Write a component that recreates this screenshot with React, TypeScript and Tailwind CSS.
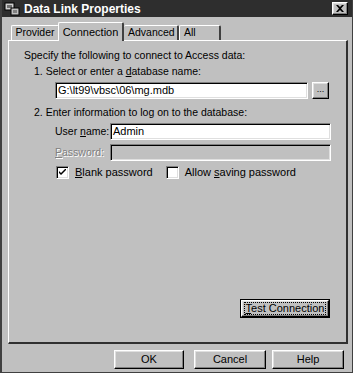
import React from "react";

const raised =
  "border border-t-white border-l-white border-r-black border-b-black shadow-[inset_-1px_-1px_0_#808080,inset_1px_1px_0_#dfdfdf]";
const sunken =
  "border border-t-[#808080] border-l-[#808080] border-r-white border-b-white shadow-[inset_1px_1px_0_#000,inset_-1px_-1px_0_#dfdfdf]";

function Check({ checked }: { checked?: boolean }) {
  return (
    <span className={`w-[13px] h-[13px] bg-white ${sunken} flex items-center justify-center shrink-0`}>
      {checked && (
        <svg width="7" height="7" viewBox="0 0 7 7">
          <path d="M0 2 L0 4 L2 6 L7 1 L7 -1 L2 4 Z" fill="#000" />
        </svg>
      )}
    </span>
  );
}

export default function App() {
  return (
    <div
      className="w-[353px] h-[373px] bg-[#c0c0c0] flex flex-col border-l-2 border-l-[#404040] border-r border-r-[#404040] border-b border-b-[#404040] text-[10.5px] text-black overflow-hidden whitespace-nowrap"
      style={{ fontFamily: '"Liberation Sans", Arial, sans-serif' }}
    >
      {/* title bar */}
      <div className="h-[17px] bg-[#2e2e2e] flex items-center pl-[2px] pr-[4px] shrink-0">
        <svg width="16" height="14" viewBox="0 0 16 14" className="shrink-0">
          <rect x="1" y="1" width="9" height="7" fill="#d0d0d0" stroke="#000" />
          <rect x="3" y="3" width="5" height="3" fill="#707070" />
          <rect x="7" y="6" width="8" height="7" fill="#c0c0c0" stroke="#000" />
          <rect x="9" y="8" width="4" height="3" fill="#808080" />
        </svg>
        <span className="ml-[4px] text-white font-bold text-[12px]">Data Link Properties</span>
        <div className={`ml-auto w-[16px] h-[13px] bg-[#c0c0c0] ${raised} flex items-center justify-center`}>
          <svg width="8" height="7" viewBox="0 0 8 7">
            <path d="M0 0 L2 0 L4 2 L6 0 L8 0 L5 3.5 L8 7 L6 7 L4 5 L2 7 L0 7 L3 3.5 Z" fill="#000" />
          </svg>
        </div>
      </div>

      <div className="flex-1 flex flex-col pl-[6px] pr-[4px] pt-[5px]">
        {/* tabs */}
        <div className="flex items-end h-[18px] pl-[3px] relative z-10">
          <div className="w-[48px] h-[15px] justify-center border-t border-l border-t-white border-l-white border-r border-r-[#404040] rounded-t-[2px] flex items-center">
            Provider
          </div>
          <div className="w-[66px] h-[19px] -mb-[1px] -ml-[1px] justify-center bg-[#c0c0c0] border-t border-l border-t-white border-l-white border-r-2 border-r-[#404040] rounded-t-[2px] flex items-start pt-[1px] text-[11px]">
            Connection
          </div>
          <div className="w-[55px] h-[15px] px-[4px] border-t border-t-white border-r-2 border-r-[#404040] rounded-t-[2px] flex items-center">
            Advanced
          </div>
          <div className="h-[15px] w-[42px] px-[4px] border-t border-l border-t-white border-l-white border-r-2 border-r-[#404040] rounded-t-[2px] flex items-center">
            All
          </div>
        </div>
        {/* panel */}
        <div className="h-[304px] border-t border-l border-t-white border-l-white border-r-2 border-b-2 border-r-[#303030] border-b-[#303030] flex flex-col pl-[15px] pr-[14px] pt-[8px]">
          <div className="leading-[13px]">Specify the following to connect to Access data:</div>
          <div className="leading-[13px] mt-[3px] pl-[10px]">
            1. Select or enter a <span className="underline">d</span>atabase name:
          </div>
          <div className="flex items-center mt-[4px] pl-[31px] gap-[4px]">
            <div className={`w-[253px] h-[17px] bg-white ${sunken} px-[2px] flex items-center text-[11px]`}>
              G:\lt99\vbsc\06\mg.mdb
            </div>
            <div className={`w-[17px] h-[17px] ${raised} flex items-center justify-center text-[9px] leading-none pb-[3px]`}>...</div>
          </div>
          <div className="leading-[13px] mt-[7px] pl-[10px]">2. Enter information to log on to the database:</div>
          <div className="flex items-center mt-[4px] pl-[31px]">
            <span className="w-[55px]">
              User <span className="underline">n</span>ame:
            </span>
            <div className={`w-[221px] h-[17px] bg-white ${sunken} px-[2px] flex items-center text-[11px]`}>Admin</div>
          </div>
          <div className="flex items-center mt-[4px] pl-[31px]">
            <span className="w-[55px] text-[#808080] [text-shadow:1px_1px_0_#fff]">
              <span className="underline">P</span>assword:
            </span>
            <div className={`w-[221px] h-[17px] bg-[#c0c0c0] ${sunken}`} />
          </div>
          <div className="flex items-center mt-[3px] pl-[32px]">
            <Check checked />
            <span className="ml-[6px] text-[11px]">
              <span className="underline">B</span>lank password
            </span>
            <span className="ml-[13px]">
              <Check />
            </span>
            <span className="ml-[6px] text-[11px]">
              Allow <span className="underline">s</span>aving password
            </span>
          </div>
          <div className="flex-1" />
          <div className="flex justify-end pb-[24px] pr-[2px]">
            <div className="border border-black">
              <div className={`w-[88px] h-[17px] ${raised} flex items-center justify-center`}>
                <span className="outline outline-1 outline-dotted outline-black px-[1px] leading-[11px] text-[11px]">
                  <span className="underline">T</span>est Connection
                </span>
              </div>
            </div>
          </div>
        </div>
        {/* bottom buttons */}
        <div className="flex justify-end mt-[6px] pr-[4px]">
          <div className={`w-[70px] h-[19px] mr-[10px] ${raised} flex items-center justify-center text-[11px]`}>OK</div>
          <div className={`w-[72px] h-[19px] mr-[6px] ${raised} flex items-center justify-center text-[11px]`}>Cancel</div>
          <div className={`w-[72px] h-[19px] ${raised} flex items-center justify-center text-[11px]`}>Help</div>
        </div>
      </div>
    </div>
  );
}
